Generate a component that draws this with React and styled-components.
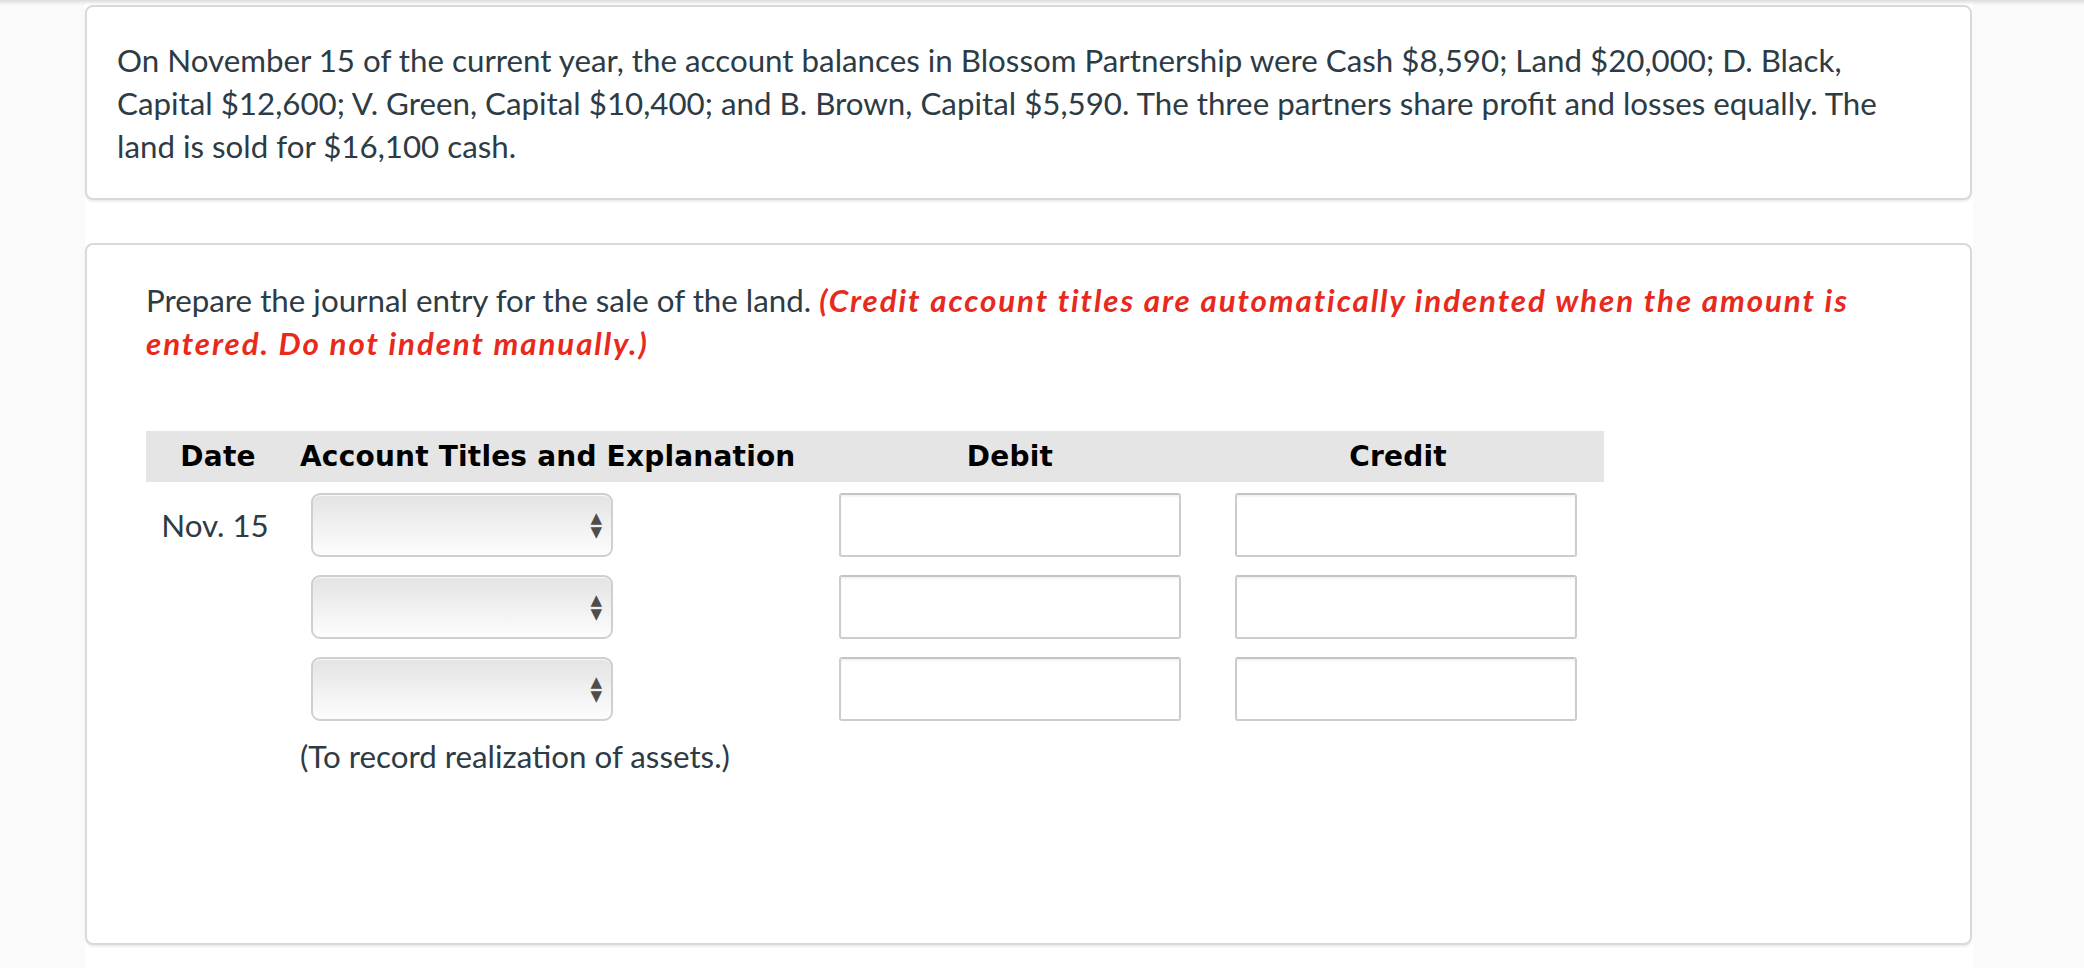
import styled, { createGlobalStyle } from 'styled-components';

const GlobalStyle = createGlobalStyle`
    * {
        box-sizing: border-box;
    }

    body {
        margin: 0;
        background-color: #fafafa;
        font-family: Lato, "Open Sans", sans-serif;
        color: #2d3b45;
    }
`;

const linhas = [1, 2, 3];

export default function App() {
    //render
    return (
        <>
            <GlobalStyle />
            <SombraTopo />
            <Pagina>
                <Cartao>
                    <Enunciado>
                        On November 15 of the current year, the account balances in Blossom Partnership were Cash $8,590; Land $20,000; D. Black, Capital $12,600; V. Green, Capital $10,400; and B. Brown, Capital $5,590. The three partners share profit and losses equally. The land is sold for $16,100 cash.
                    </Enunciado>
                </Cartao>

                <CartaoQuestao>
                    <Instrucao>
                        Prepare the journal entry for the sale of the land. <Aviso>(Credit account titles are automatically indented when the amount is entered. Do not indent manually.)</Aviso>
                    </Instrucao>

                    <Tabela>
                        <Cabecalho>
                            <CelulaTitulo>Date</CelulaTitulo>
                            <CelulaTitulo alinhar="left">Account Titles and Explanation</CelulaTitulo>
                            <CelulaTitulo>Debit</CelulaTitulo>
                            <CelulaTitulo recuo={8}>Credit</CelulaTitulo>
                        </Cabecalho>

                        {linhas.map((n) => (
                            <Linha key={n}>
                                <Data>{n === 1 ? 'Nov. 15' : ''}</Data>
                                <SeletorCaixa>
                                    <Seletor defaultValue="">
                                        <option value=""></option>
                                    </Seletor>
                                    <Setas>
                                        <span>▲</span>
                                        <span>▼</span>
                                    </Setas>
                                </SeletorCaixa>
                                <Valor margem={19} />
                                <Valor margem={35} />
                            </Linha>
                        ))}

                        <Explicacao>(To record realization of assets.)</Explicacao>
                    </Tabela>
                </CartaoQuestao>
            </Pagina>
        </>
    );
}

const SombraTopo = styled.div`
    position: fixed;
    top: 0;
    left: 0;
    width: 100%;
    height: 5px;
    background: linear-gradient(#dcdcdc, rgba(240, 240, 240, 0));
    z-index: 2;
`;

const Pagina = styled.main`
    width: 1888px;
    min-height: 968px;
    margin-left: 85px;
    padding-top: 5px;
    background-color: #ffffff;
`;

const Cartao = styled.section`
    width: 1887px;
    background-color: #ffffff;
    border: 2px solid #d9d9d9;
    border-radius: 8px;
    box-shadow: 0 2px 2px rgba(0, 0, 0, 0.07);
    padding: 32px 50px 30px 30px;
`;

const CartaoQuestao = styled(Cartao)`
    height: 702px;
    margin-top: 43px;
    padding: 34px 60px 0 59px;
`;

const Enunciado = styled.p`
    margin: 0;
    font-size: 31.3px;
    line-height: 43px;
    color: #2d3b45;
`;

const Instrucao = styled.p`
    margin: 0;
    font-size: 31.3px;
    line-height: 43px;
    color: #2d3b45;
`;

const Aviso = styled.span`
    color: #e8291c;
    font-weight: 700;
    font-style: italic;
    letter-spacing: 1.9px;
`;

const Tabela = styled.div`
    width: 1458px;
    margin-top: 66px;
`;

const Cabecalho = styled.div`
    display: grid;
    grid-template-columns: 144px 530px 380px 404px;
    height: 51px;
    align-items: center;
    background-color: #e5e5e5;
`;

const CelulaTitulo = styled.div`
    font-family: "DejaVu Sans", Verdana, sans-serif;
    font-weight: 700;
    font-size: 28px;
    letter-spacing: 0.2px;
    color: #000000;
    text-align: ${(p) => p.alinhar || 'center'};
    padding-left: ${(p) => (p.alinhar === 'left' ? '10px' : '0')};
    padding-right: ${(p) => (p.recuo ? `${p.recuo}px` : '0')};
`;

const Linha = styled.div`
    display: grid;
    grid-template-columns: 144px 530px 380px 404px;
    align-items: center;
    height: 64px;
    margin-top: 11px;

    & + & {
        margin-top: 18px;
    }
`;

const Data = styled.div`
    text-align: center;
    font-size: 31.3px;
    color: #2d3b45;
    padding-right: 6px;
`;

const SeletorCaixa = styled.div`
    position: relative;
    width: 302px;
    height: 64px;
    margin-left: 21px;
`;

const Seletor = styled.select`
    appearance: none;
    width: 100%;
    height: 100%;
    border: 2px solid #cfcfcf;
    border-radius: 9px;
    background: linear-gradient(#e3e3e3, #f3f3f3 60%, #fdfdfd);
    box-shadow: inset 0 1px 1px rgba(255, 255, 255, 0.8);
    font-family: Lato, sans-serif;
    font-size: 26px;
    cursor: pointer;
    outline: none;
`;

const Setas = styled.div`
    position: absolute;
    top: 50%;
    right: 11px;
    transform: translateY(-50%);
    display: flex;
    flex-direction: column;
    align-items: center;
    font-family: "DejaVu Sans", sans-serif;
    font-size: 15px;
    line-height: 14px;
    color: #4d4d4d;
    pointer-events: none;
`;

const Valor = styled.input`
    width: 342px;
    height: 64px;
    margin-left: ${(p) => p.margem}px;
    border: 2px solid #cccccc;
    border-top-color: #c4c4c4;
    border-radius: 3px;
    box-shadow: inset 0 2px 2px rgba(0, 0, 0, 0.05);
    background-color: #ffffff;
    font-family: Lato, sans-serif;
    font-size: 26px;
    outline: none;
`;

const Explicacao = styled.p`
    margin: 14px 0 0 154px;
    font-size: 31.3px;
    line-height: 43px;
    color: #2d3b45;
`;
